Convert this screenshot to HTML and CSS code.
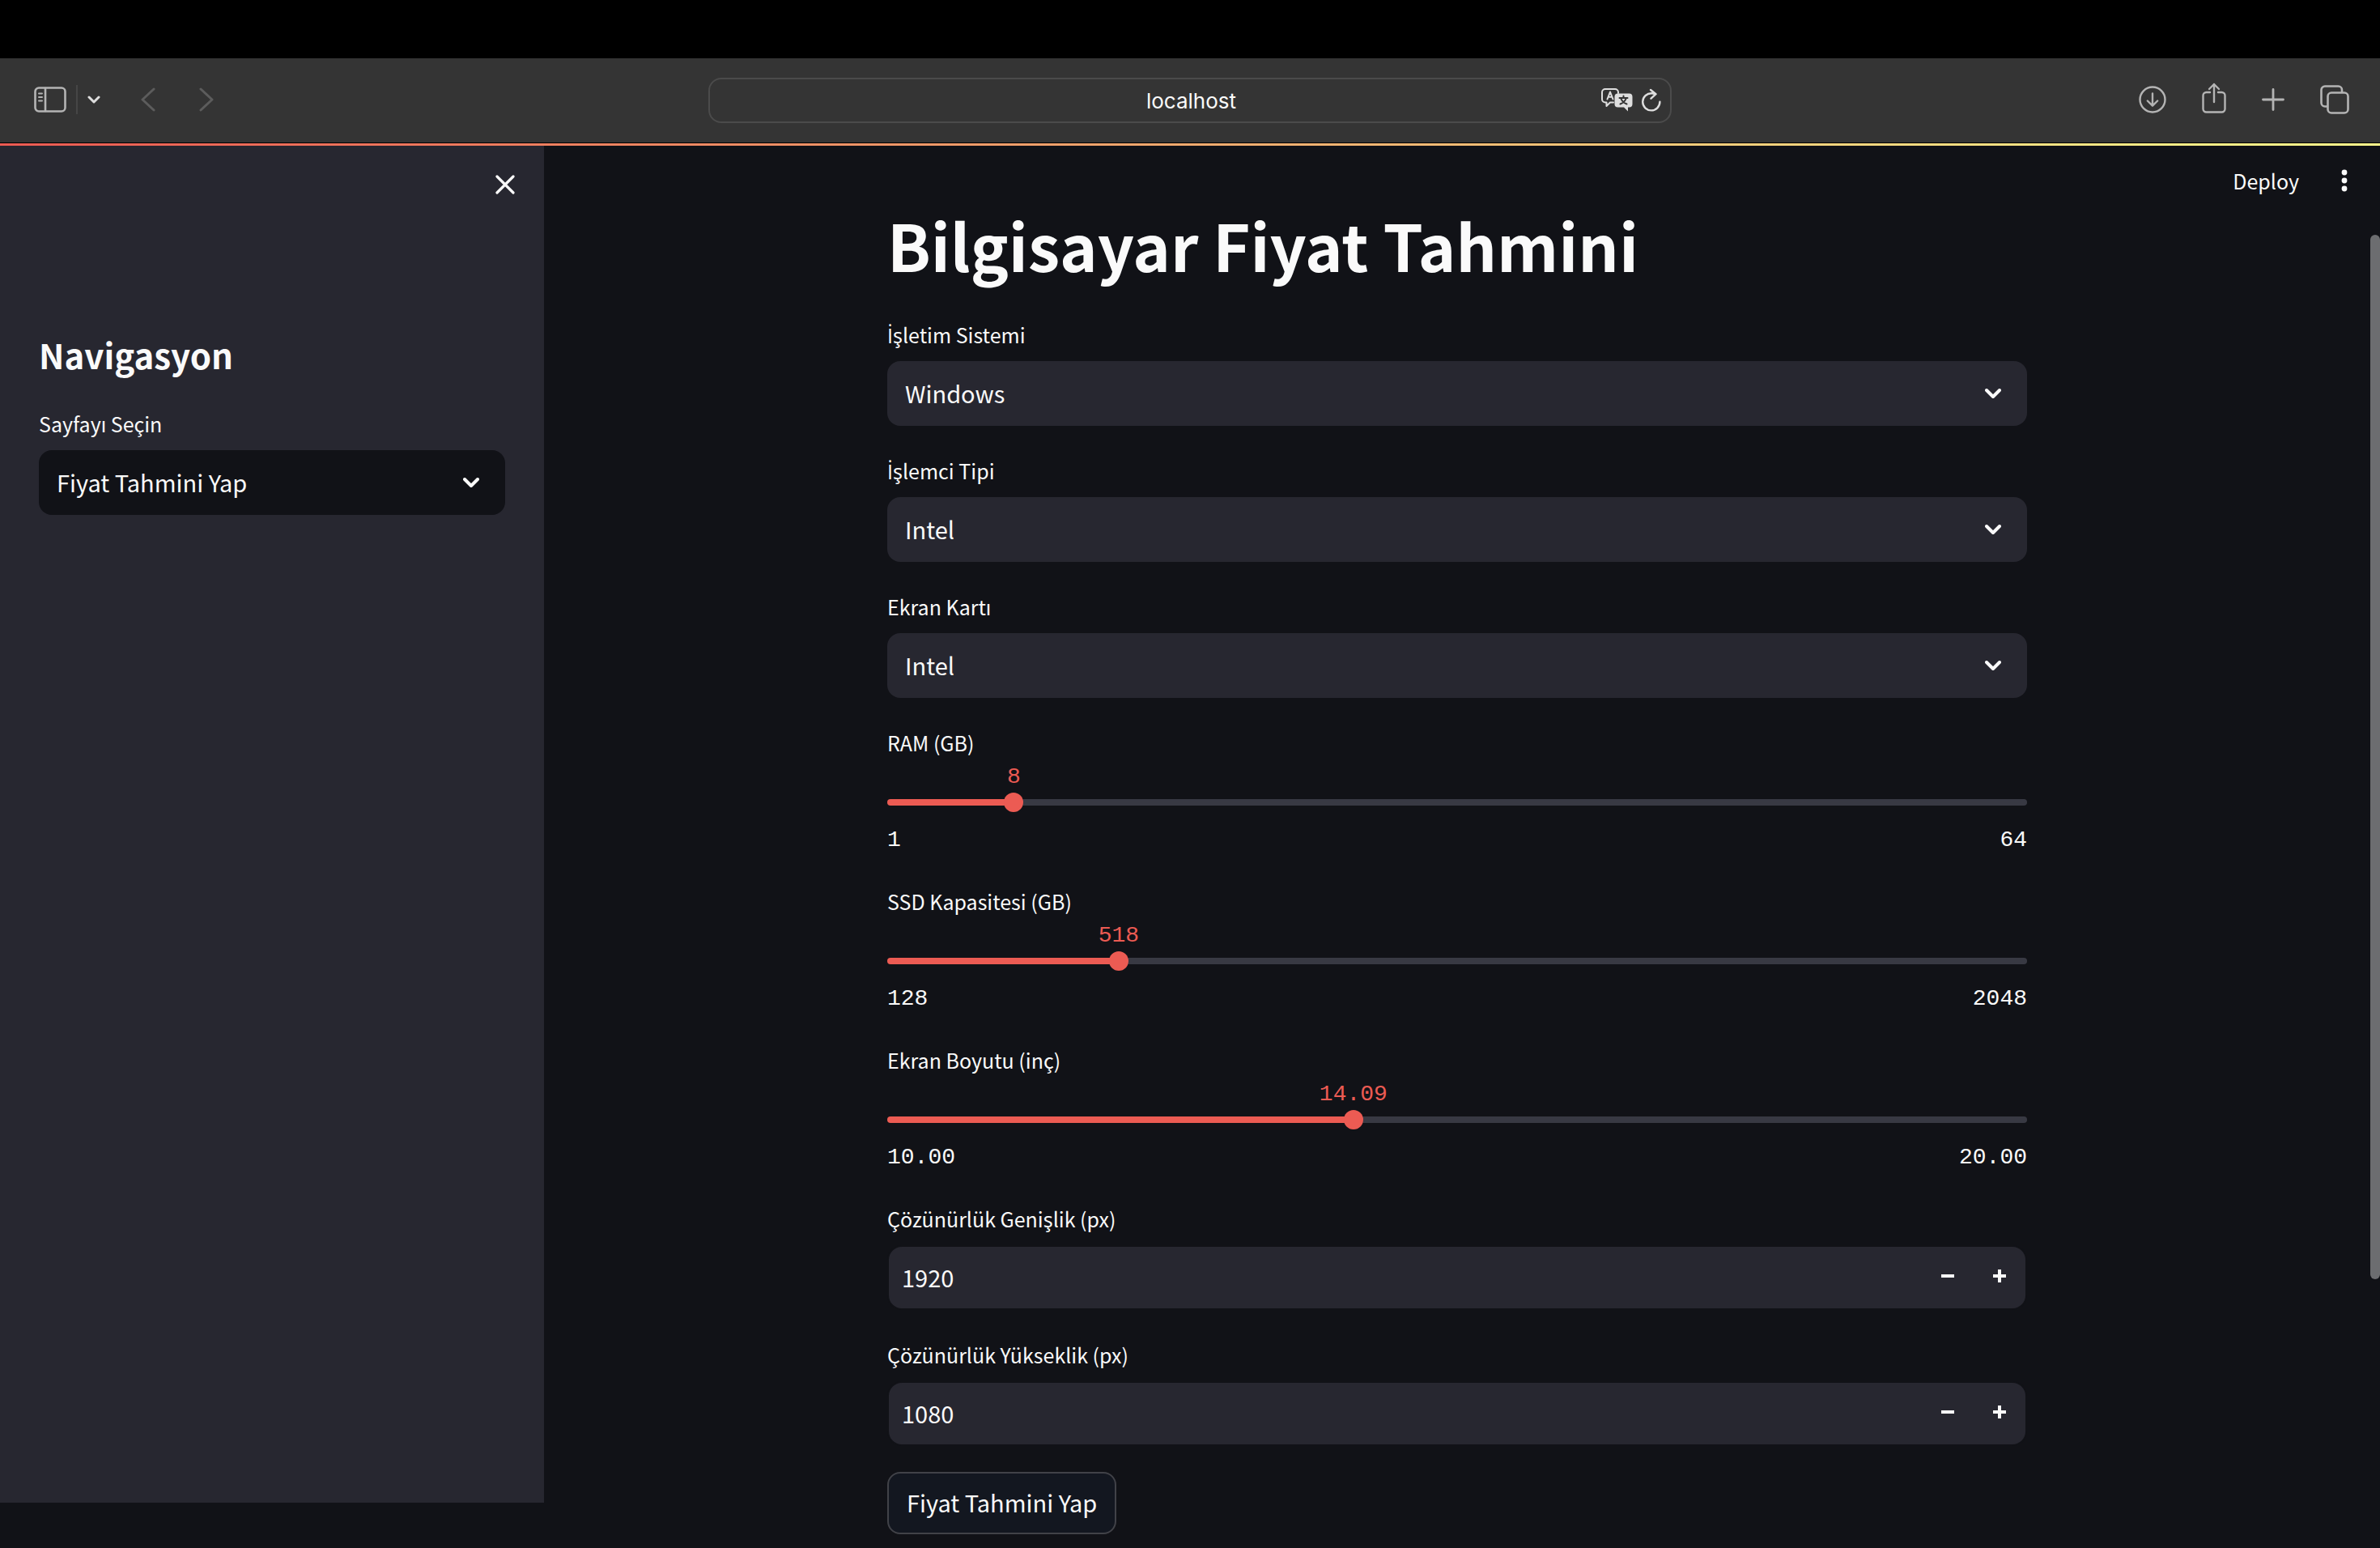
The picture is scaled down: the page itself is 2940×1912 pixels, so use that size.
FILE: index.html
```html
<!DOCTYPE html>
<html lang="tr">
<head>
<meta charset="utf-8">
<title>Bilgisayar Fiyat Tahmini</title>
<link rel="stylesheet" href="styles.css">
</head>
<body>
<div class="notch"></div>
<header class="toolbar">
  <div class="tools tools-left">
    <button class="tool" aria-label="Kenar çubuğu"><svg width="40" height="32" viewBox="0 0 40 32" fill="none" stroke="#b4b4b4" stroke-width="2.6" stroke-linecap="round"><rect x="1.5" y="1.5" width="37" height="29" rx="4.5"/><path d="M14 2v28"/><path d="M6 8.500h4M6 13h4M6 17.500h4" stroke-width="2"/></svg></button>
    <span class="divider"></span>
    <button class="tool" aria-label="Sekme grupları"><svg width="16" height="10" viewBox="0 0 16 10" fill="none" stroke="#dedede" stroke-width="3" stroke-linecap="round" stroke-linejoin="round"><path d="M2 2l6 6 6-6"/></svg></button>
    <button class="tool tool-back" aria-label="Geri"><svg width="18" height="30" viewBox="0 0 18 30" fill="none" stroke="#5c5c5c" stroke-width="3" stroke-linecap="round" stroke-linejoin="round"><path d="M16 2L2 15l14 13"/></svg></button>
    <button class="tool tool-forward" aria-label="İleri"><svg width="18" height="30" viewBox="0 0 18 30" fill="none" stroke="#5c5c5c" stroke-width="3" stroke-linecap="round" stroke-linejoin="round"><path d="M2 2l14 13L2 28"/></svg></button>
  </div>
  <div class="address">
    <input class="address-input" type="text" value="localhost" aria-label="Adres">
    <button class="tool" aria-label="Çevir"><svg width="39" height="30" viewBox="0 0 39 30" fill="none" stroke="#dedede" stroke-width="2" stroke-linejoin="round" stroke-linecap="round"><path d="M15 17.500H11L6.500 22V17.500H5A4 4 0 0 1 1 13.500V5A4 4 0 0 1 5 1h12a4 4 0 0 1 4 4v1"/><path d="M7.500 13.500L11 4.500l3.500 9M8.700 10.700h4.600"/><path d="M20.500 6.500h14a4 4 0 0 1 4 4v9a4 4 0 0 1-4 4H33V28.500l-5-5h-7.500a4 4 0 0 1-4-4v-9a4 4 0 0 1 4-4z" fill="#dedede" stroke="none"/><path d="M22.500 12h10M27.500 9.500V12M24.300 12.500c1 3 3.500 5.500 7.200 7M30.700 12.500c-1 3-3.500 5.500-7.200 7" stroke="#343434"/></svg></button>
    <button class="tool tool-reload" aria-label="Yenile"><svg width="26" height="30" viewBox="0 0 26 30" fill="none" stroke="#dedede" stroke-width="2.400" stroke-linecap="round" stroke-linejoin="round"><path d="M17.500 7.200C16 6.500 14.500 6.200 12.800 6.200A10.600 10.600 0 1 0 23.400 16.800M12 2l6.500 5.200L12.500 12.700"/></svg></button>
  </div>
  <div class="tools tools-right">
    <button class="tool" aria-label="İndirilenler"><svg width="34" height="34" viewBox="0 0 34 34" fill="none" stroke="#b4b4b4" stroke-width="2.400" stroke-linecap="round" stroke-linejoin="round"><circle cx="17" cy="17" r="15.500"/><path d="M17 9.500v15M10.800 18.500l6.200 6.200 6.200-6.200"/></svg></button>
    <button class="tool tool-share" aria-label="Paylaş"><svg width="30" height="38" viewBox="0 0 30 38" fill="none" stroke="#b4b4b4" stroke-width="2.400" stroke-linecap="round" stroke-linejoin="round"><path d="M10 12H5.500A4 4 0 0 0 1.500 16v16.500a4 4 0 0 0 4 4h19a4 4 0 0 0 4-4V16a4 4 0 0 0-4-4H20M15 24V2M9 8l6-6 6 6"/></svg></button>
    <button class="tool" aria-label="Yeni sekme"><svg width="28" height="28" viewBox="0 0 28 28" fill="none" stroke="#b4b4b4" stroke-width="2.800" stroke-linecap="round"><path d="M14 1.500v25M1.500 14h25"/></svg></button>
    <button class="tool" aria-label="Sekmeler"><svg width="36" height="36" viewBox="0 0 36 36" fill="none" stroke="#b4b4b4" stroke-width="2.600"><path d="M9.500 26.500H6A4.500 4.500 0 0 1 1.500 22V6A4.500 4.500 0 0 1 6 1.500h16.500A4.500 4.500 0 0 1 27 6v3"/><rect x="9.500" y="9.500" width="25" height="25" rx="4.500"/></svg></button>
  </div>
</header>
<div class="decoration"></div>
<div class="app">
  <aside class="sidebar">
    <div class="sidebar-top">
      <button class="tool" aria-label="Kapat"><svg width="24" height="24" viewBox="0 0 24 24" fill="none" stroke="#fafafa" stroke-width="3.200" stroke-linecap="round"><path d="M2 2l20 20M22 2L2 22"/></svg></button>
    </div>
    <h2 class="sidebar-title">Navigasyon</h2>
    <div class="field">
      <label class="label" for="page">Sayfayı Seçin</label>
      <div class="select select-dark">
        <select id="page"><option>Fiyat Tahmini Yap</option></select>
        <svg class="chevron" width="20" height="12" viewBox="0 0 20 12"><path d="M2 2l8 8 8-8"/></svg>
      </div>
    </div>
  </aside>
  <main class="main">
    <div class="app-header">
      <button class="deploy">Deploy</button>
      <button class="tool" aria-label="Menü"><svg width="8" height="28" viewBox="0 0 8 28" fill="#fafafa"><circle cx="4" cy="4" r="3.400"/><circle cx="4" cy="14" r="3.400"/><circle cx="4" cy="24" r="3.400"/></svg></button>
    </div>
    <div class="content">
      <h1 class="title">Bilgisayar Fiyat Tahmini</h1>
      <form class="form">
        <div class="field">
          <label class="label" for="os"><span class="dotted">İ</span>şletim Sistemi</label>
          <div class="select">
            <select id="os"><option>Windows</option></select>
            <svg class="chevron" width="20" height="12" viewBox="0 0 20 12"><path d="M2 2l8 8 8-8"/></svg>
          </div>
        </div>
        <div class="field">
          <label class="label" for="cpu"><span class="dotted">İ</span>şlemci Tipi</label>
          <div class="select">
            <select id="cpu"><option>Intel</option></select>
            <svg class="chevron" width="20" height="12" viewBox="0 0 20 12"><path d="M2 2l8 8 8-8"/></svg>
          </div>
        </div>
        <div class="field">
          <label class="label" for="gpu">Ekran Kartı</label>
          <div class="select">
            <select id="gpu"><option>Intel</option></select>
            <svg class="chevron" width="20" height="12" viewBox="0 0 20 12"><path d="M2 2l8 8 8-8"/></svg>
          </div>
        </div>
        <div class="slider" style="--pos: 11.11%">
          <label class="label" for="ram">RAM (GB)</label>
          <div class="value-row"><output class="value" for="ram">8</output></div>
          <div class="rail"><input id="ram" type="range" min="1" max="64" value="8"></div>
          <div class="limits"><span>1</span><span>64</span></div>
        </div>
        <div class="slider" style="--pos: 20.31%">
          <label class="label" for="ssd">SSD Kapasitesi (GB)</label>
          <div class="value-row"><output class="value" for="ssd">518</output></div>
          <div class="rail"><input id="ssd" type="range" min="128" max="2048" value="518"></div>
          <div class="limits"><span>128</span><span>2048</span></div>
        </div>
        <div class="slider" style="--pos: 40.9%">
          <label class="label" for="inch">Ekran Boyutu (inç)</label>
          <div class="value-row"><output class="value" for="inch">14.09</output></div>
          <div class="rail"><input id="inch" type="range" min="10" max="20" step="0.01" value="14.09"></div>
          <div class="limits"><span>10.00</span><span>20.00</span></div>
        </div>
        <div class="field">
          <label class="label" for="w">Çözünürlük Genişlik (px)</label>
          <div class="number">
            <input id="w" type="number" value="1920">
            <button class="step" type="button" aria-label="Azalt"><svg width="16" height="16" viewBox="0 0 16 16"><path d="M0 8h16"/></svg></button>
            <button class="step" type="button" aria-label="Artır"><svg width="16" height="16" viewBox="0 0 16 16"><path d="M0 8h16M8 0v16"/></svg></button>
          </div>
        </div>
        <div class="field">
          <label class="label" for="h">Çözünürlük Yükseklik (px)</label>
          <div class="number">
            <input id="h" type="number" value="1080">
            <button class="step" type="button" aria-label="Azalt"><svg width="16" height="16" viewBox="0 0 16 16"><path d="M0 8h16"/></svg></button>
            <button class="step" type="button" aria-label="Artır"><svg width="16" height="16" viewBox="0 0 16 16"><path d="M0 8h16M8 0v16"/></svg></button>
          </div>
        </div>
        <button class="submit" type="button">Fiyat Tahmini Yap</button>
      </form>
    </div>
    <div class="scroll-thumb"></div>
  </main>
</div>
</body>
</html>
```

FILE: styles.css
```css
:root {
  --bg: #111217;
  --panel: #272730;
  --text: #fafafa;
  --red: #ec5b53;
  --sans: "Noto Sans CJK SC", "Noto Sans", sans-serif;
}

* { box-sizing: border-box; }

body {
  margin: 0;
  min-height: 100vh;
  background: var(--bg);
  color: var(--text);
  font-family: var(--sans);
  font-size: 29px;
  display: flex;
  flex-direction: column;
  overflow: hidden;
}

button, input, select {
  font: inherit;
  color: inherit;
  background: none;
  border: 0;
  padding: 0;
  margin: 0;
  outline: 0;
}

svg { display: block; }

/* Browser window */
.notch { height: 72px; background: #000; }

.toolbar {
  height: 104px;
  background: #343434;
  display: grid;
  grid-template-columns: 1fr minmax(400px, 1190px) 1fr;
  align-items: center;
}

.tools { display: flex; align-items: center; padding-bottom: 2px; }
.tools-left { padding-left: 42px; }
.tools-right { justify-content: flex-end; gap: 44px; padding-right: 38px; }
.tool-share { padding-bottom: 4px; }
.divider { width: 2px; height: 36px; margin: 0 12px; background: #464646; }
.tool-back { margin-left: 50px; }
.tool-forward { margin-left: 54px; }

.address {
  height: 56px;
  border: 2px solid #4b4b4b;
  border-radius: 16px;
  display: flex;
  align-items: center;
  padding-right: 10px;
}
.address-input {
  flex: 1;
  min-width: 0;
  padding-left: 88px;
  text-align: center;
  font-family: Inter, sans-serif;
  font-size: 26px;
}
.tool-reload { margin-left: 10px; }

.decoration {
  height: 4px;
  border-top: 1px solid #000;
  background: linear-gradient(90deg, #ec5b53, #fffb8c);
}

/* App */
.app { flex: 1; display: flex; align-items: flex-start; }

.sidebar {
  width: 672px;
  height: calc(100vh - 236px);
  flex: none;
  padding: 0 48px;
  background: var(--panel);
}
.sidebar-top { height: 96px; display: flex; justify-content: flex-end; align-items: center; margin-right: -12px; }
.sidebar-title { margin: 132px 0 32px; font-size: 42px; line-height: 60px; font-weight: 700; }

.main { flex: 1; position: relative; padding-right: 12px; }
.app-header {
  display: flex;
  justify-content: flex-end;
  align-items: center;
  gap: 52px;
  padding: 16px 28px 0 0;
}
.deploy { font-size: 25px; line-height: 54px; }

.content { max-width: 1472px; margin: 0 auto; padding: 0 32px; }
.title { margin: 0 0 36px; font-size: 79px; line-height: 104px; font-weight: 700; }
.form { display: flex; flex-direction: column; gap: 32px; align-items: stretch; }

.label { display: block; font-size: 25px; line-height: 46px; }
.field .label { margin-bottom: 10px; }
.dotted { font-family: "Open Sans", sans-serif; line-height: 1; }

.select { display: grid; align-items: center; height: 80px; border-radius: 16px; background: var(--panel); }
.select-dark { background: var(--bg); }
.select select { grid-area: 1 / 1; width: 100%; height: 80px; padding: 0 22px 2px; appearance: none; }
.chevron {
  grid-area: 1 / 1;
  justify-self: end;
  margin-right: 32px;
  pointer-events: none;
  fill: none;
  stroke: var(--text);
  stroke-width: 4;
  stroke-linecap: round;
  stroke-linejoin: round;
}

.value-row { position: relative; height: 40px; }
.value, .limits { font-family: "Liberation Mono", monospace; font-size: 28px; line-height: 40px; }
.value { position: absolute; left: var(--pos); transform: translateX(-50%); color: var(--red); }
.rail { display: grid; grid-template-rows: 22px; align-items: center; }
.rail::before {
  content: "";
  grid-area: 1 / 1;
  height: 8px;
  border-radius: 4px;
  background: linear-gradient(90deg, var(--red) var(--pos), #383943 var(--pos));
}
.rail input { grid-area: 1 / 1; appearance: none; height: 24px; margin: 0 -12px; z-index: 1; }
.rail input::-webkit-slider-thumb { appearance: none; width: 24px; height: 24px; border-radius: 50%; background: var(--red); }
.limits { display: flex; justify-content: space-between; padding-top: 16px; }

.number {
  display: flex;
  height: 80px;
  border: 2px solid var(--bg);
  border-radius: 18px;
  background: var(--panel);
}
.number input { flex: 1; min-width: 0; padding: 0 16px 2px; appearance: textfield; }
.number input::-webkit-inner-spin-button { appearance: none; margin: 0; }
.step { width: 64px; display: grid; place-items: center; padding-bottom: 4px; }
.step path { stroke: var(--text); stroke-width: 4; }

.submit {
  align-self: flex-start;
  height: 77px;
  padding: 0 22px 4px;
  border: 2px solid #414248;
  border-radius: 16px;
  background: #131720;
}

.scroll-thumb {
  position: absolute;
  top: 110px;
  right: 0;
  width: 12px;
  height: 1290px;
  border-radius: 6px;
  background: #6c6d70;
}
```
